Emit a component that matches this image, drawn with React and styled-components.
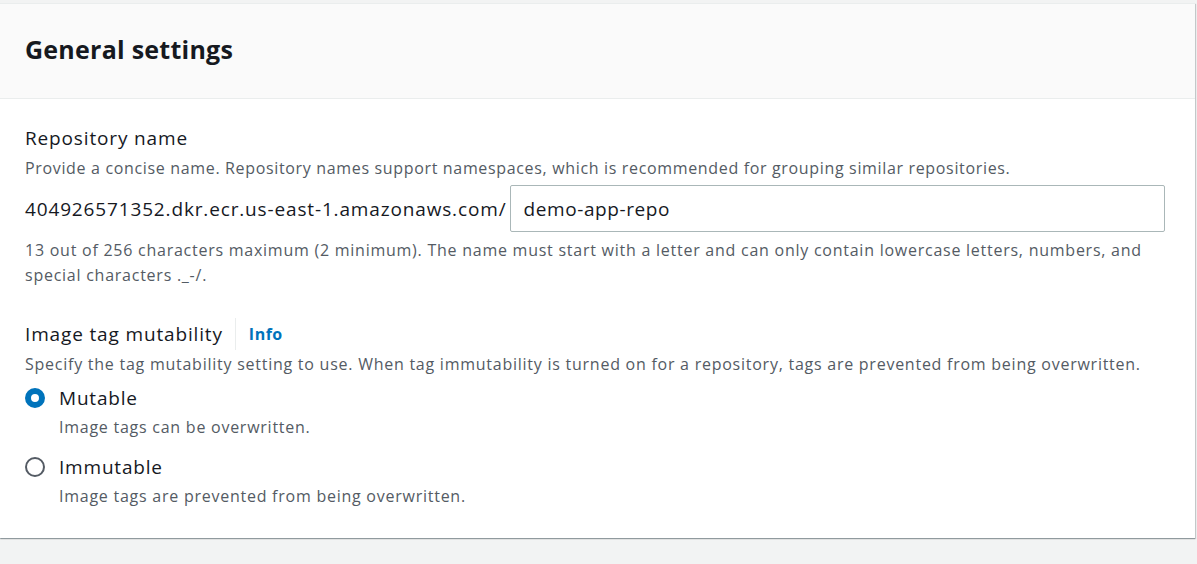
import React from 'react'
import styled, { createGlobalStyle } from 'styled-components'

const GlobalStyle = createGlobalStyle`
    body {
        margin: 0;
        background: #f2f3f3;
        font-family: "Open Sans", "Noto Sans", sans-serif;
        color: #16191f;
    }
`

const Page = styled.div`
    width: 1197px;
    height: 564px;
    padding-top: 3px;
    box-sizing: border-box;
    overflow: hidden;
`
const Card = styled.section`
    width: 1195px;
    background: #ffffff;
    box-shadow: 0 1px 1px 0 rgba(0, 28, 36, 0.3), 1px 1px 1px 0 rgba(0, 28, 36, 0.15);
    border-top: 1px solid #eaeded;
`
const Header = styled.header`
    background: #fafafa;
    border-bottom: 1px solid #eaeded;
    height: 94px;
    display: flex;
    align-items: center;
    padding: 0 25px;
`
const Title = styled.h2`
    margin: 0;
    margin-top: -5px;
    font-size: 25px;
    font-weight: 700;
    letter-spacing: 0.25px;
`
const Body = styled.div`
    padding: 23px 25px 30px;
    display: flex;
    flex-direction: column;
    gap: 30px;
`
const Field = styled.div`
    display: flex;
    flex-direction: column;
`
const LabelRow = styled.div`
    display: flex;
    align-items: center;
    height: 32px;
`
const Label = styled.label`
    font-size: 19px;
    line-height: 32px;
    letter-spacing: 0.85px;
`
const InfoLink = styled.a`
    font-size: 16px;
    font-weight: 700;
    color: #0073bb;
    margin-left: 12px;
    padding-left: 13px;
    border-left: 1px solid #eaeded;
    line-height: 32px;
    letter-spacing: 0.5px;
    text-decoration: none;
`
const Description = styled.p`
    margin: 2px 0 0;
    font-size: 16px;
    line-height: 24px;
    letter-spacing: ${p => p.$spacing || '0.75px'};
    color: #545b64;
`
const InputRow = styled.div`
    display: flex;
    align-items: center;
    margin-top: 5px;
    margin-bottom: 6px;
`
const Prefix = styled.span`
    font-size: 19px;
    letter-spacing: 0.85px;
    margin-right: 4px;
`
const TextInput = styled.input`
    width: 655px;
    height: 47px;
    box-sizing: border-box;
    border: 1px solid #aab7b8;
    border-radius: 2px;
    padding: 0 12px;
    font-family: inherit;
    font-size: 19px;
    letter-spacing: 0.6px;
    color: #16191f;
    outline: none;
`
const Constraint = styled.p`
    margin: 0;
    font-size: 16px;
    line-height: 25px;
    letter-spacing: 0.75px;
    color: #545b64;
    max-width: 1145px;
`
const RadioGroup = styled.div`
    display: flex;
    flex-direction: column;
    gap: 13px;
    margin-top: 7px;
`
const RadioItem = styled.label`
    display: grid;
    grid-template-columns: 20px 1fr;
    column-gap: 14px;
    row-gap: 2px;
    align-items: center;
    cursor: pointer;
`
const RadioDot = styled.span`
    width: 20px;
    height: 20px;
    box-sizing: border-box;
    border-radius: 50%;
    border: ${p => (p.$checked ? '6px solid #0073bb' : '2px solid #545b64')};
    background: #ffffff;
`
const RadioLabel = styled.span`
    font-size: 19px;
    line-height: 30px;
    letter-spacing: 0.8px;
`
const RadioHint = styled.span`
    grid-column: 2;
    font-size: 16px;
    line-height: 24px;
    letter-spacing: 0.75px;
    color: #545b64;
`

const options = [
    { value: 'mutable', label: 'Mutable', hint: 'Image tags can be overwritten.' },
    { value: 'immutable', label: 'Immutable', hint: 'Image tags are prevented from being overwritten.' },
]

const App = () => {
    const selected = 'mutable'
    return (
        <Page>
            <GlobalStyle />
            <Card>
                <Header>
                    <Title>General settings</Title>
                </Header>
                <Body>
                    <Field>
                        <LabelRow>
                            <Label>Repository name</Label>
                        </LabelRow>
                        <Description $spacing="0.66px">
                            Provide a concise name. Repository names support namespaces, which is recommended for grouping similar repositories.
                        </Description>
                        <InputRow>
                            <Prefix>404926571352.dkr.ecr.us-east-1.amazonaws.com/</Prefix>
                            <TextInput defaultValue="demo-app-repo" />
                        </InputRow>
                        <Constraint>
                            13 out of 256 characters maximum (2 minimum). The name must start with a letter and can only contain lowercase letters, numbers, and special characters ._-/.
                        </Constraint>
                    </Field>
                    <Field>
                        <LabelRow>
                            <Label>Image tag mutability</Label>
                            <InfoLink>Info</InfoLink>
                        </LabelRow>
                        <Description>
                            Specify the tag mutability setting to use. When tag immutability is turned on for a repository, tags are prevented from being overwritten.
                        </Description>
                        <RadioGroup>
                            {options.map(o => (
                                <RadioItem key={o.value}>
                                    <RadioDot $checked={o.value === selected} />
                                    <RadioLabel>{o.label}</RadioLabel>
                                    <RadioHint>{o.hint}</RadioHint>
                                </RadioItem>
                            ))}
                        </RadioGroup>
                    </Field>
                </Body>
            </Card>
        </Page>
    )
}

export default App
